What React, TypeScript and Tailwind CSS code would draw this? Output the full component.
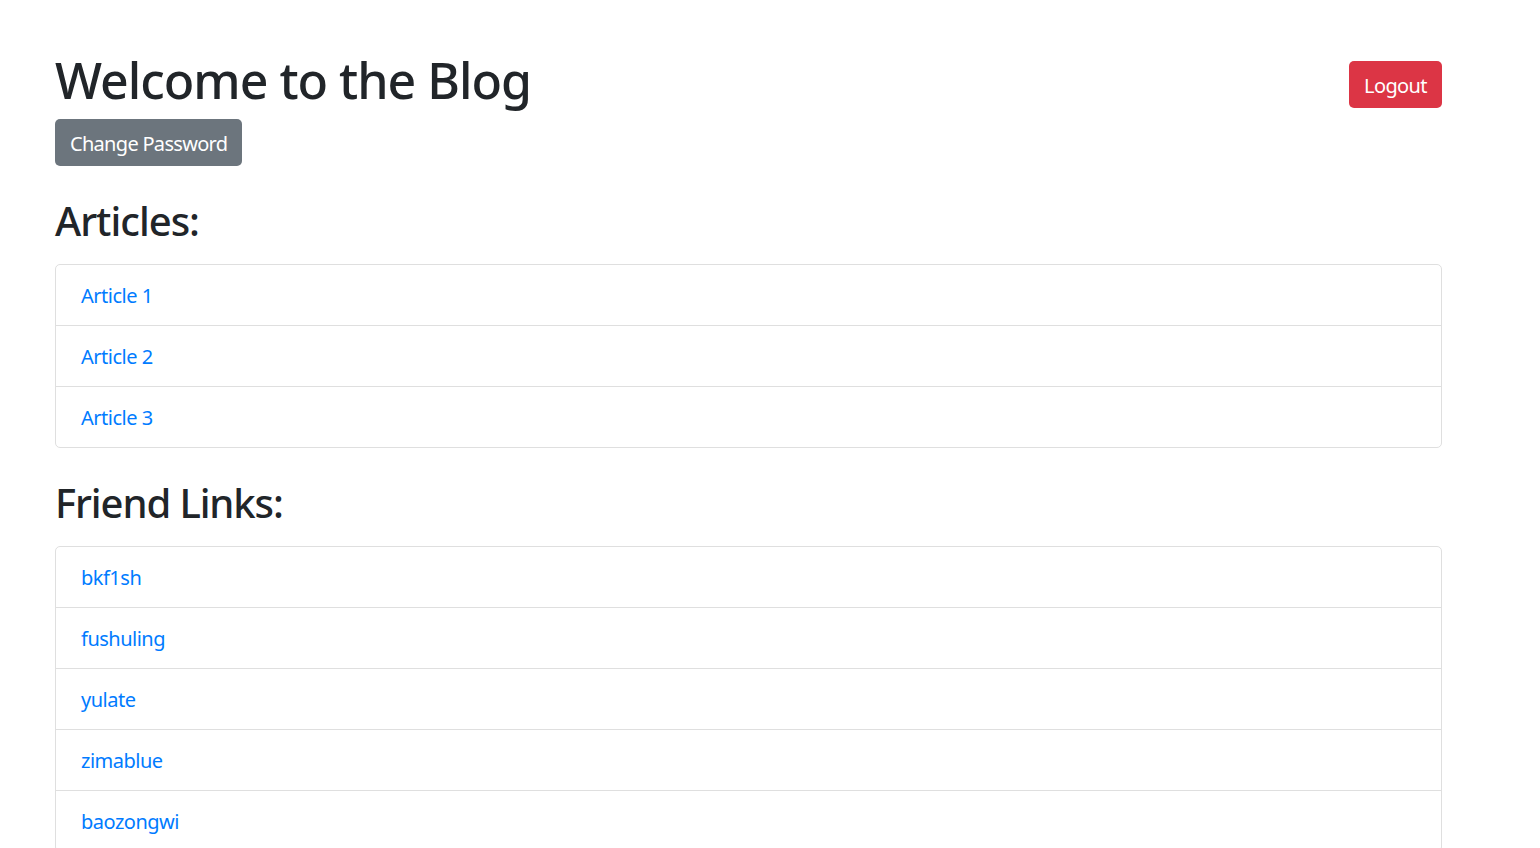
import React from "react";

const articles = ["Article 1", "Article 2", "Article 3"];
const friends = ["bkf1sh", "fushuling", "yulate", "zimablue", "baozongwi"];

function ListGroup({ items }: { items: string[] }) {
  return (
    <ul className="border border-[#dfdfdf] rounded-[5px] w-full">
      {items.map((it, i) => (
        <li
          key={it}
          className={
            "flex items-center px-[25px] pt-[2px] " +
            (i > 0 ? "h-[61px] border-t border-[#dfdfdf]" : "h-[60px]")
          }
        >
          <a href="#" className="text-[20px] leading-[30px] tracking-[-0.5px] text-[#007bff]">
            {it}
          </a>
        </li>
      ))}
    </ul>
  );
}

export default function App() {
  return (
    <div className="min-h-screen bg-white text-[#212529] font-['Noto_Sans','Open_Sans',sans-serif]">
      <div className="ml-[55px] w-[1387px] pt-[50px]">
        <div className="flex justify-between items-start">
          <h1 className="text-[50px] leading-[60px] font-medium tracking-[-1px]">Welcome to the Blog</h1>
          <button className="mt-[11px] h-[47px] px-[15px] pt-[2px] rounded-[5px] bg-[#dc3545] text-white text-[20px] tracking-[-0.6px]">
            Logout
          </button>
        </div>
        <button className="mt-[9px] h-[47px] px-[15px] pt-[2px] rounded-[5px] bg-[#6c757d] text-white text-[20px] tracking-[-0.7px]">
          Change Password
        </button>
        <h2 className="mt-[31px] mb-[19px] text-[40px] leading-[48px] font-medium tracking-[-1px]">Articles:</h2>
        <ListGroup items={articles} />
        <h2 className="mt-[31px] mb-[19px] text-[40px] leading-[48px] font-medium tracking-[-1.1px]">Friend Links:</h2>
        <ListGroup items={friends} />
      </div>
    </div>
  );
}
